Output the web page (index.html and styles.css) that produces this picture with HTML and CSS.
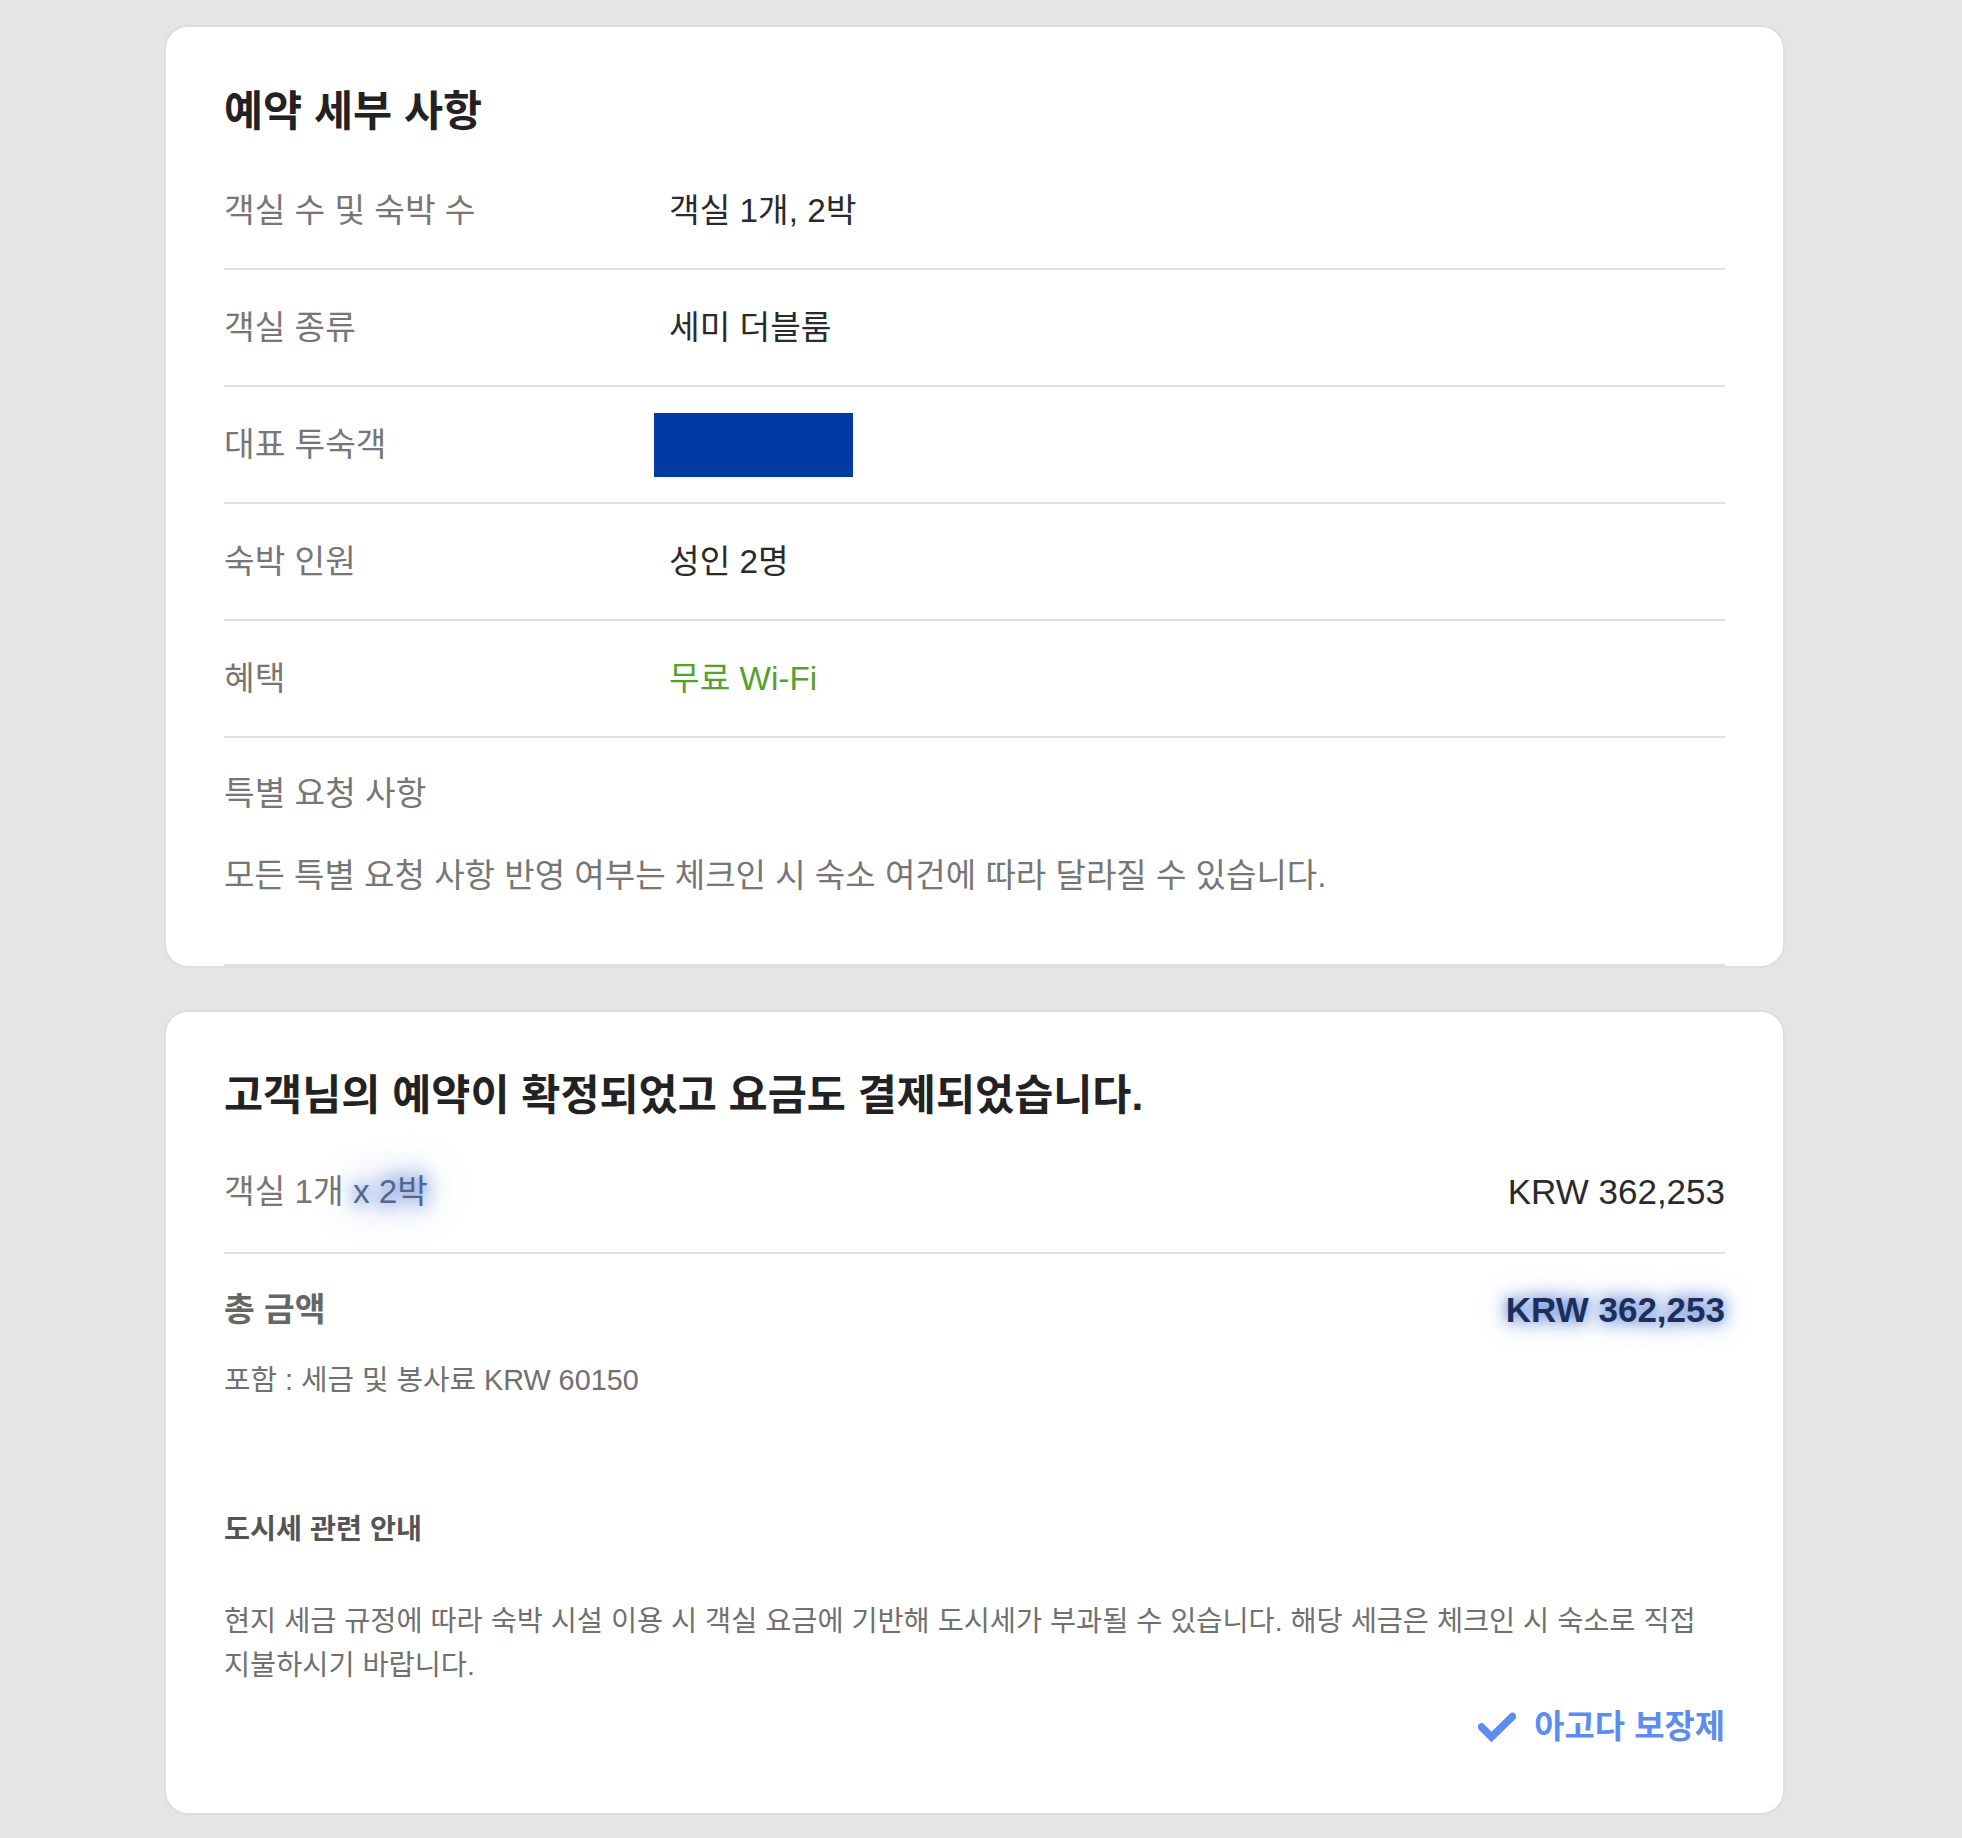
FILE: index.html
```html
<!DOCTYPE html>
<html lang="ko">
<head>
<meta charset="utf-8">
<title>예약 세부 사항</title>
<link rel="stylesheet" href="styles.css">
</head>
<body>
<div class="page">
  <section class="card">
    <h2 class="card-title">예약 세부 사항</h2>
    <div class="row">
      <div class="label">객실 수 및 숙박 수</div>
      <div class="value">객실 1개, 2박</div>
    </div>
    <div class="row">
      <div class="label">객실 종류</div>
      <div class="value">세미 더블룸</div>
    </div>
    <div class="row">
      <div class="label">대표 투숙객</div>
      <div class="value"><span class="redact"></span></div>
    </div>
    <div class="row">
      <div class="label">숙박 인원</div>
      <div class="value">성인 2명</div>
    </div>
    <div class="row">
      <div class="label">혜택</div>
      <div class="value benefit">무료 Wi-Fi</div>
    </div>
    <div class="special">
      <div class="special-label">특별 요청 사항</div>
      <p class="special-note">모든 특별 요청 사항 반영 여부는 체크인 시 숙소 여건에 따라 달라질 수 있습니다.</p>
    </div>
  </section>

  <section class="card card-price">
    <h2 class="card-title">고객님의 예약이 확정되었고 요금도 결제되었습니다.</h2>
    <div class="price-row">
      <div class="label">객실 1개 <span class="glow">x 2박</span></div>
      <div class="amount">KRW 362,253</div>
    </div>
    <div class="total">
      <div class="total-line">
        <div class="total-label">총 금액</div>
        <div class="amount amount-total">KRW 362,253</div>
      </div>
      <div class="included">포함 : 세금 및 봉사료 KRW 60150</div>
      <h3 class="tax-title">도시세 관련 안내</h3>
      <p class="tax-text">현지 세금 규정에 따라 숙박 시설 이용 시 객실 요금에 기반해 도시세가 부과될 수 있습니다. 해당 세금은 체크인 시 숙소로 직접 지불하시기 바랍니다.</p>
      <div class="guarantee">
        <svg class="check" viewBox="0 0 38 30" width="38" height="30" aria-hidden="true">
          <polyline points="3.5,15 13.5,25 34.5,4.5" fill="none" stroke="#5b8def" stroke-width="7.5" stroke-linejoin="miter" stroke-linecap="round"/>
        </svg>
        <span class="guarantee-text">아고다 보장제</span>
      </div>
    </div>
  </section>
</div>
</body>
</html>
```

FILE: styles.css
```css
* {
  box-sizing: border-box;
}

html, body {
  margin: 0;
  padding: 0;
  background: #e5e5e5;
}

body {
  font-family: "Liberation Sans", "Noto Sans CJK KR", sans-serif;
  color: #2a2a2e;
  word-break: keep-all;
}

.page {
  padding: 25px 0 26px 164px;
  display: flex;
  flex-direction: column;
  gap: 42px;
}

.card {
  width: 1621px;
  background: #ffffff;
  border: 2px solid #dddde2;
  border-radius: 24px;
  padding: 59px 58px 0 58px;
}

.card-price {
  padding-top: 58px;
}

.card-title {
  margin: 0 0 15px 0;
  font-size: 42.5px;
  line-height: 52px;
  font-weight: 700;
  color: #222225;
}

.row {
  display: grid;
  grid-template-columns: 445px 1fr;
  align-items: center;
  height: 117px;
  border-bottom: 2px solid #e0e0e5;
}

.label {
  font-size: 33.3px;
  line-height: 44px;
  color: #767676;
}

.value {
  font-size: 33.3px;
  line-height: 44px;
  color: #2a2a2e;
}

.benefit {
  color: #55a130;
}

.redact {
  display: block;
  width: 199px;
  height: 64px;
  margin-left: -15px;
  background: #003aa3;
}

.special {
  padding: 34px 0 66px 0;
  border-bottom: 2px solid #e0e0e5;
}

.special-label {
  font-size: 33.3px;
  line-height: 44px;
  color: #767676;
}

.special-note {
  margin: 38px 0 0 0;
  font-size: 33.1px;
  line-height: 44px;
  color: #767676;
}

.price-row {
  display: flex;
  justify-content: space-between;
  align-items: center;
  height: 117px;
  padding-bottom: 6px;
  border-bottom: 2px solid #e0e0e5;
}

.glow {
  color: #52678f;
  text-shadow: 0 0 16px rgba(70, 112, 205, 0.95), 0 0 28px rgba(70, 112, 205, 0.75), 0 0 40px rgba(90, 130, 215, 0.55);
}

.amount {
  font-size: 35px;
  line-height: 44px;
  color: #2a2a2e;
}

.amount-total {
  font-weight: 700;
  color: #1c2f5a;
  text-shadow: 0 0 14px rgba(70, 112, 210, 0.9), 0 0 26px rgba(70, 112, 210, 0.6);
}

.total {
  padding: 34px 0 64px 0;
}

.total-line {
  display: flex;
  justify-content: space-between;
  align-items: center;
  height: 44px;
}

.total-label {
  font-size: 33.4px;
  line-height: 44px;
  font-weight: 700;
  color: #666666;
}

.included {
  margin-top: 28px;
  font-size: 28.8px;
  line-height: 40px;
  color: #707070;
}

.tax-title {
  margin: 109px 0 0 0;
  font-size: 28.3px;
  line-height: 40px;
  font-weight: 700;
  color: #555555;
}

.tax-text {
  margin: 50px 0 0 0;
  font-size: 28.4px;
  line-height: 44px;
  color: #707070;
}

.guarantee {
  margin-top: 18px;
  display: flex;
  justify-content: flex-end;
  align-items: center;
  gap: 18px;
  height: 44px;
}

.check {
  display: block;
}

.guarantee-text {
  font-size: 32.9px;
  line-height: 44px;
  font-weight: 700;
  color: #5b8def;
}
```
